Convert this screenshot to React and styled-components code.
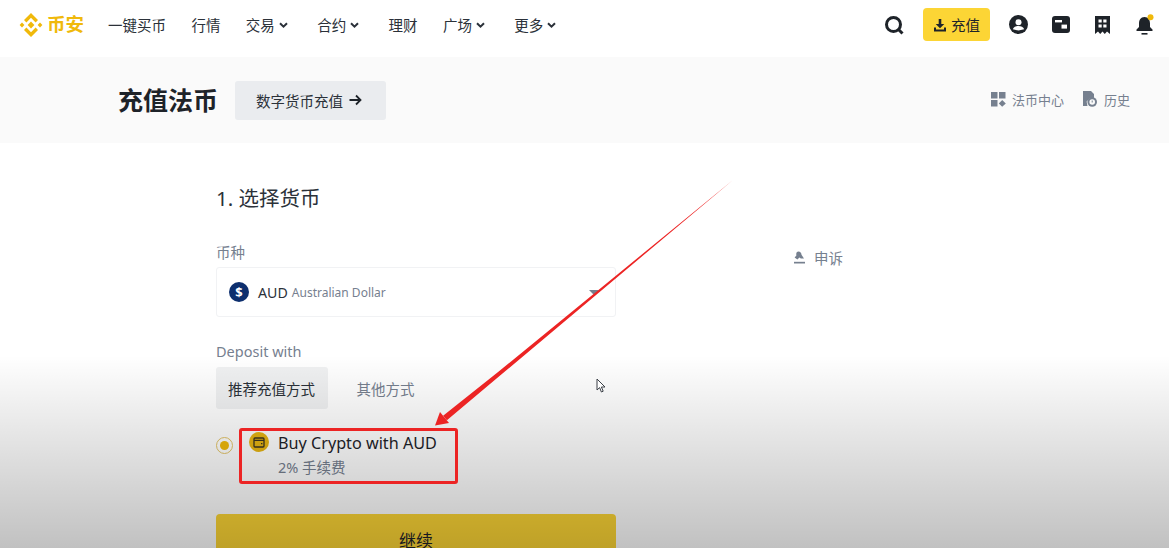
import styled, { createGlobalStyle } from "styled-components";

const FONT = `"Noto Sans", "Noto Sans CJK SC", sans-serif`;

const GlobalStyle = createGlobalStyle`
  html, body {
    margin: 0;
    height: 548px;
    overflow: hidden;
    background: #fff;
    font-family: ${FONT};
    color: #1e2329;
  }
`;

const Page = styled.div`
  position: relative;
  width: 1169px;
  height: 548px;
  overflow: hidden;
`;

const Header = styled.header`
  display: flex;
  align-items: center;
  height: 57px;
  padding: 0 15px 8px 18px;
  box-sizing: border-box;
  background: #fff;
`;

const Logo = styled.div`
  display: flex;
  align-items: center;
  gap: 3px;
  width: 90px;
  font-size: 18.5px;
  font-weight: 700;
  color: #f0b90b;
  line-height: 1;
`;

const Nav = styled.nav`
  display: flex;
  gap: 25.4px;
`;

const NavItem = styled.div`
  display: flex;
  align-items: center;
  font-size: 14.5px;
  color: #2b3139;
  line-height: 20px;
`;

const Chevron = styled.svg`
  width: 17px;
  height: 12px;
  margin-top: 1px;
`;

const HeaderRight = styled.div`
  display: flex;
  align-items: center;
  margin-left: auto;
`;

const HeaderIcon = styled.svg`
  display: block;
  width: ${(p) => p.$w}px;
  height: ${(p) => p.$h}px;
  margin-right: ${(p) => p.$mr}px;
`;

const DepositButton = styled.button`
  display: flex;
  align-items: center;
  justify-content: center;
  gap: 4px;
  width: 67px;
  height: 33px;
  margin: 0 19px;
  padding: 0;
  border: 0;
  border-radius: 4px;
  background: #fcd535;
  font: 14.5px ${FONT};
  color: #1e2329;
`;

const SubHeader = styled.section`
  display: flex;
  align-items: center;
  height: 86px;
  padding: 0 39px 0 118px;
  box-sizing: border-box;
  background: #fafafa;
`;

const Title = styled.h1`
  margin: 0 17px 0 0;
  font-size: 25px;
  font-weight: 700;
  line-height: 32px;
  color: #1e2329;
`;

const CryptoLink = styled.button`
  display: flex;
  align-items: center;
  gap: 6px;
  width: 151px;
  height: 39px;
  padding: 0 0 0 21px;
  border: 0;
  border-radius: 3px;
  background: #eaecef;
  font: 14.5px ${FONT};
  color: #2b3139;
`;

const SubLinks = styled.div`
  display: flex;
  gap: 19px;
  margin: 0 0 2px auto;
`;

const SubLink = styled.div`
  display: flex;
  align-items: center;
  gap: 6px;
  font-size: 13px;
  color: #76808f;
`;

const Card = styled.main`
  display: flex;
  height: 405px;
  padding-left: 216px;
  border-radius: 24px 24px 0 0;
  background: #fff;
`;

const Form = styled.div`
  width: 400px;
`;

const StepTitle = styled.h2`
  margin: 41px 0 0;
  font-size: 20.5px;
  font-weight: 400;
  line-height: 28px;
  color: #2b3139;
`;

const FieldLabel = styled.div`
  margin-top: ${(p) => p.$top}px;
  font-size: 14.5px;
  line-height: 20px;
  color: #76808f;
`;

const Select = styled.div`
  display: flex;
  align-items: center;
  height: 50px;
  margin-top: 5px;
  padding: 0 16px 0 12px;
  box-sizing: border-box;
  border: 1px solid #f1f2f4;
  border-radius: 3px;
`;

const CoinBadge = styled.span`
  display: flex;
  align-items: center;
  justify-content: center;
  width: 20px;
  height: 20px;
  margin-right: 9px;
  border-radius: 50%;
  background: #0d2f6e;
  font-size: 13px;
  font-weight: 700;
  color: #fff;
`;

const CoinCode = styled.span`
  font-size: 14.2px;
  color: #2b3139;
`;

const CoinName = styled.span`
  margin-left: 4px;
  font-size: 12px;
  color: #76808f;
`;

const Caret = styled.span`
  margin-left: auto;
  border-left: 5px solid transparent;
  border-right: 5px solid transparent;
  border-top: 5px solid #76808f;
`;

const Tabs = styled.div`
  display: flex;
  gap: 17px;
  margin-top: 6px;
`;

const Tab = styled.div`
  display: flex;
  align-items: center;
  height: 42px;
  padding: 0 12.5px 0 12px;
  border-radius: 3px;
  background: ${(p) => (p.$active ? "#f0f1f2" : "transparent")};
  font-size: 14.5px;
  color: ${(p) => (p.$active ? "#2b3139" : "#76808f")};
`;

const Option = styled.div`
  display: flex;
  align-items: flex-start;
  height: 50px;
  margin-top: 23px;
`;

const Radio = styled.span`
  display: flex;
  align-items: center;
  justify-content: center;
  flex: none;
  width: 17px;
  height: 17px;
  margin-top: 5px;
  box-sizing: border-box;
  border: 1px solid #e3c468;
  border-radius: 50%;
  background: #fff;

  &::after {
    content: "";
    width: 9px;
    height: 9px;
    border-radius: 50%;
    background: #f0b90b;
  }
`;

const OptionIcon = styled.span`
  display: flex;
  align-items: center;
  justify-content: center;
  flex: none;
  width: 20px;
  height: 20px;
  margin: 0 9px 0 16px;
  border-radius: 50%;
  background: #e6b412;
`;

const OptionName = styled.div`
  font-size: 16.2px;
  line-height: 22px;
  color: #1e2329;
`;

const OptionFee = styled.div`
  margin-top: 2px;
  font-size: 14.5px;
  line-height: 22px;
  color: #76808f;
`;

const Continue = styled.button`
  display: block;
  width: 100%;
  height: 50px;
  margin-top: 32px;
  padding: 0;
  border: 0;
  border-radius: 4px;
  background: #fcd535;
  font: 17px ${FONT};
  color: #1e2329;
`;

const Aside = styled.aside`
  display: flex;
  align-items: center;
  gap: 8px;
  height: 20px;
  margin: 104px 0 0 177px;
  font-size: 14.5px;
  color: #76808f;
`;

const Shade = styled.div`
  position: absolute;
  left: 0;
  right: 0;
  top: 355px;
  bottom: 0;
  background: linear-gradient(rgba(0, 0, 0, 0), rgba(0, 0, 0, 0.245));
  pointer-events: none;
`;

const Pointer = styled.svg`
  position: absolute;
  left: 595px;
  top: 378px;
  width: 12px;
  height: 16px;
`;

const Arrow = styled.svg`
  position: absolute;
  left: 0;
  top: 0;
  width: 1169px;
  height: 548px;
  pointer-events: none;
`;

const Highlight = styled.div`
  position: absolute;
  left: 239px;
  top: 428px;
  width: 219px;
  height: 56px;
  box-sizing: border-box;
  border: 3px solid #ec2424;
  border-radius: 3px;
`;

const navItems = [
  { label: "一键买币" },
  { label: "行情" },
  { label: "交易", menu: true },
  { label: "合约", menu: true },
  { label: "理财" },
  { label: "广场", menu: true },
  { label: "更多", menu: true },
];

export default function App() {
  return (
    <Page>
      <GlobalStyle />
      <Header>
        <Logo>
          <svg width="26" height="26" viewBox="0 0 26 26" fill="#f0b90b">
            <path d="M13 9.6 16.4 13 13 16.4 9.6 13Z" />
            <path d="M13 1 20 8 17.6 10.4 13 5.8 8.4 10.4 6 8Z" />
            <path d="M13 25 20 18 17.6 15.6 13 20.2 8.4 15.6 6 18Z" />
            <path d="M4 10.6 6.4 13 4 15.4 1.6 13Z" />
            <path d="M22 10.6 24.4 13 22 15.4 19.6 13Z" />
          </svg>
          币安
        </Logo>
        <Nav>
          {navItems.map((item) => (
            <NavItem key={item.label}>
              {item.label}
              {item.menu && (
                <Chevron viewBox="0 0 17 12" fill="none" stroke="#2b3139" strokeWidth="2">
                  <path d="M5 4.2 8.5 7.7 12 4.2" />
                </Chevron>
              )}
            </NavItem>
          ))}
        </Nav>
        <HeaderRight>
          <HeaderIcon $w={20} $h={20} $mr={0} viewBox="0 0 20 20" fill="none" stroke="#1e2329" strokeWidth="3">
            <circle cx="9.5" cy="9.5" r="7" />
            <path d="M14 14 18.5 18.5" />
          </HeaderIcon>
          <DepositButton>
            <svg width="14" height="14" viewBox="0 0 14 14" fill="#1e2329">
              <path d="M5.7 1h2.6v5h3L7 10.2 2.7 6h3Z" />
              <path d="M1 9.5h2V11.4h8V9.5h2V13.4H1Z" />
            </svg>
            充值
          </DepositButton>
          <HeaderIcon $w={19} $h={19} $mr={24} viewBox="0 0 19 19">
            <circle cx="9.5" cy="9.5" r="9.5" fill="#1e2329" />
            <circle cx="9.5" cy="7.2" r="3" fill="#fff" />
            <path d="M3.8 14.2c1-2.3 3-3.1 5.7-3.1s4.7.8 5.7 3.1L9.5 15.6Z" fill="#fff" />
          </HeaderIcon>
          <HeaderIcon $w={18} $h={17} $mr={25} viewBox="0 0 18 17">
            <rect width="18" height="17" rx="3" fill="#1e2329" />
            <rect x="3" y="4" width="7" height="2.4" fill="#fff" />
            <rect x="9.5" y="8.6" width="5.5" height="4" fill="#fff" />
          </HeaderIcon>
          <HeaderIcon $w={15} $h={18} $mr={26} viewBox="0 0 15 18">
            <path d="M0 0H15V18L12 15.6 9.8 18 7.5 15.6 5.2 18 3 15.6 0 18Z" fill="#1e2329" />
            <rect x="3.5" y="3.5" width="3.2" height="3" fill="#fff" />
            <rect x="8.3" y="3.5" width="3.2" height="3" fill="#fff" />
            <rect x="3.5" y="8.5" width="3.2" height="3" fill="#fff" />
            <rect x="8.3" y="8.5" width="3.2" height="3" fill="#fff" />
          </HeaderIcon>
          <HeaderIcon $w={18} $h={22} $mr={0} viewBox="0 0 18 22">
            <path d="M8.5 3C4.6 3 3 6 3 9.5V13L.5 15.5V17h16v-1.5L14 13V9.5C14 6 12.4 3 8.5 3Z" fill="#1e2329" />
            <path d="M5.5 19h6v1.6h-6Z" fill="#1e2329" />
            <circle cx="14.5" cy="3.2" r="3" fill="#f0b90b" />
          </HeaderIcon>
        </HeaderRight>
      </Header>

      <SubHeader>
        <Title>充值法币</Title>
        <CryptoLink>
          数字货币充值
          <svg width="13" height="12" viewBox="0 0 13 12" fill="none" stroke="#1e2329" strokeWidth="1.8">
            <path d="M0.5 6H11.5M7 1.5 11.5 6 7 10.5" />
          </svg>
        </CryptoLink>
        <SubLinks>
          <SubLink>
            <svg width="15" height="15" viewBox="0 0 15 15" fill="#76808f">
              <rect width="6.5" height="6.5" />
              <rect x="8" width="6.5" height="6.5" />
              <rect y="8" width="6.5" height="6.5" />
              <path d="M11.2 8 14.8 11.4 11.2 14.8 7.8 11.4Z" />
            </svg>
            法币中心
          </SubLink>
          <SubLink>
            <svg width="15" height="16" viewBox="0 0 15 16" fill="#76808f">
              <path d="M0 0H8L11 3V7H7L3.6 10.5 4.5 15H0Z" />
              <circle cx="9.2" cy="11" r="4.8" />
              <circle cx="9.2" cy="11" r="2.8" fill="#fafafa" />
              <path d="M8.7 9.5h1v2h-1Z" />
            </svg>
            历史
          </SubLink>
        </SubLinks>
      </SubHeader>

      <Card>
        <Form>
          <StepTitle>1. 选择货币</StepTitle>
          <FieldLabel $top={30}>币种</FieldLabel>
          <Select>
            <CoinBadge>$</CoinBadge>
            <CoinCode>AUD</CoinCode>
            <CoinName>Australian Dollar</CoinName>
            <Caret />
          </Select>
          <FieldLabel $top={24}>Deposit with</FieldLabel>
          <Tabs>
            <Tab $active>推荐充值方式</Tab>
            <Tab>其他方式</Tab>
          </Tabs>
          <Option>
            <Radio />
            <OptionIcon>
              <svg width="12" height="11" viewBox="0 0 12 11" fill="none" stroke="#3a3320" strokeWidth="1.3">
                <rect x="1" y="1" width="10" height="9" rx="1" />
                <path d="M1 3.4H11M8 6.6h1.4" />
              </svg>
            </OptionIcon>
            <div>
              <OptionName>Buy Crypto with AUD</OptionName>
              <OptionFee>2% 手续费</OptionFee>
            </div>
          </Option>
          <Continue>继续</Continue>
        </Form>
        <Aside>
          <svg width="13" height="13" viewBox="0 0 13 13" fill="#76808f">
            <path d="M5.4 0.5C7.4 0.5 8.6 2 8.5 3.8L11 7.6H7.8L6.4 6.4 4.4 8.6 1.6 6.4 3.4 4.4C2.9 2.2 3.7 0.5 5.4 0.5Z" />
            <path d="M1 10.8h11v1.7H1Z" />
          </svg>
          申诉
        </Aside>
      </Card>

      <Shade />
      <Pointer viewBox="0 0 12 16" fill="#fff" stroke="#3a3f46" strokeWidth="1">
        <path d="M2 1V12L4.6 9.6 6.4 14 8.2 13.2 6.4 9H10Z" />
      </Pointer>
      <Arrow viewBox="0 0 1169 548" fill="#ec2424">
        <path d="M733 180 501.3 374.5 446.9 420.3 443.1 415.7 498.7 371.5Z" />
        <path d="M435 425.5 440 412 449 423Z" />
      </Arrow>
      <Highlight />
    </Page>
  );
}
